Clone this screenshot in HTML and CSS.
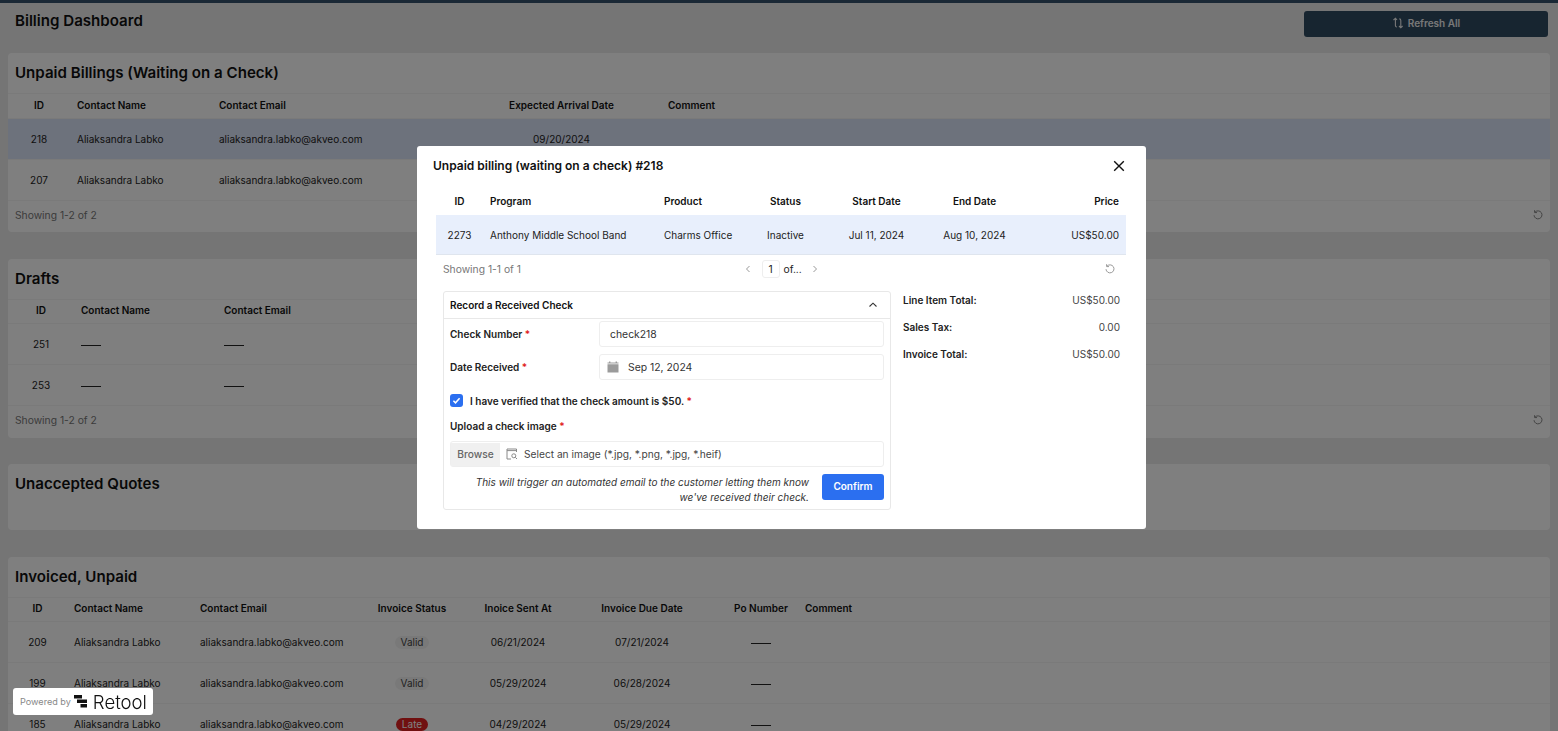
FILE: index.html
```html
<!DOCTYPE html>
<html lang="en">
<head>
  <meta charset="UTF-8">
  <title>Billing Dashboard</title>
  <link rel="stylesheet" href="styles.css">
</head>
<body>

  <div class="top-line"></div>

  <header class="page-header">
    <h1>Billing Dashboard</h1>
    <button class="refresh-all">
      <svg width="12" height="12" viewBox="0 0 12 12" fill="none" stroke="currentColor" stroke-width="1.1"><path d="M1.5 3 3.5 1.2 5 3M3.4 1.4V8.5c0 1 .6 1.5 1.5 1.5M7 9l1.8 1.8L10.6 9M8.8 10.6V3.4c0-1-.6-1.5-1.5-1.5"/></svg>
      Refresh All
    </button>
  </header>

  <!-- Unpaid billings -->
  <section class="card card-unpaid">
    <h2>Unpaid Billings (Waiting on a Check)</h2>
    <div class="row head cols-unpaid">
      <span class="center">ID</span><span>Contact Name</span><span>Contact Email</span><span class="center">Expected Arrival Date</span><span>Comment</span>
    </div>
    <div class="row selected cols-unpaid">
      <span class="center">218</span><span>Aliaksandra Labko</span><span>aliaksandra.labko@akveo.com</span><span class="center">09/20/2024</span><span></span>
    </div>
    <div class="row cols-unpaid">
      <span class="center">207</span><span>Aliaksandra Labko</span><span>aliaksandra.labko@akveo.com</span><span class="center">09/20/2024</span><span></span>
    </div>
    <div class="card-foot">
      <span>Showing 1-2 of 2</span>
      <svg class="reload" width="12" height="12" viewBox="0 0 12 12" fill="none" stroke="currentColor"><path d="M3 3.2A4 4 0 1 1 2 6.2M2.6 1.2V3.6H5"/></svg>
    </div>
  </section>

  <!-- Drafts -->
  <section class="card card-drafts">
    <h2>Drafts</h2>
    <div class="row head short cols-drafts">
      <span class="center">ID</span><span>Contact Name</span><span>Contact Email</span>
    </div>
    <div class="row cols-drafts">
      <span class="center">251</span><span><i class="dash"></i></span><span><i class="dash"></i></span>
    </div>
    <div class="row cols-drafts">
      <span class="center">253</span><span><i class="dash"></i></span><span><i class="dash"></i></span>
    </div>
    <div class="card-foot tall">
      <span>Showing 1-2 of 2</span>
      <svg class="reload" width="12" height="12" viewBox="0 0 12 12" fill="none" stroke="currentColor"><path d="M3 3.2A4 4 0 1 1 2 6.2M2.6 1.2V3.6H5"/></svg>
    </div>
  </section>

  <!-- Quotes -->
  <section class="card card-quotes">
    <h2>Unaccepted Quotes</h2>
  </section>

  <!-- Invoiced -->
  <section class="card card-invoiced">
    <h2>Invoiced, Unpaid</h2>
    <div class="row head short cols-invoiced">
      <span class="center">ID</span><span>Contact Name</span><span>Contact Email</span><span class="center">Invoice Status</span><span class="center">Inoice Sent At</span><span class="center">Invoice Due Date</span><span class="center po">Po Number</span><span>Comment</span>
    </div>
    <div class="row cols-invoiced">
      <span class="center">209</span><span>Aliaksandra Labko</span><span>aliaksandra.labko@akveo.com</span><span class="center"><b class="tag">Valid</b></span><span class="center">06/21/2024</span><span class="center">07/21/2024</span><span class="center po"><i class="dash"></i></span><span></span>
    </div>
    <div class="row cols-invoiced">
      <span class="center">199</span><span>Aliaksandra Labko</span><span>aliaksandra.labko@akveo.com</span><span class="center"><b class="tag">Valid</b></span><span class="center">05/29/2024</span><span class="center">06/28/2024</span><span class="center po"><i class="dash"></i></span><span></span>
    </div>
    <div class="row cols-invoiced">
      <span class="center">185</span><span>Aliaksandra Labko</span><span>aliaksandra.labko@akveo.com</span><span class="center"><b class="tag late">Late</b></span><span class="center">04/29/2024</span><span class="center">05/29/2024</span><span class="center po"><i class="dash"></i></span><span></span>
    </div>
  </section>

  <div class="overlay"></div>

  <!-- Modal -->
  <div class="modal">
    <div class="modal-title">
      <span>Unpaid billing (waiting on a check) #218</span>
      <svg width="12" height="12" viewBox="0 0 12 12" fill="none" stroke="#111" stroke-width="1.4"><path d="M1.2 1.2 10.8 10.8M10.8 1.2 1.2 10.8"/></svg>
    </div>

    <div class="line-table">
      <div class="row head cols-line">
        <span class="center">ID</span><span>Program</span><span>Product</span><span class="center">Status</span><span class="center">Start Date</span><span class="center">End Date</span><span class="right">Price</span>
      </div>
      <div class="row selected-light cols-line">
        <span class="center">2273</span><span>Anthony Middle School Band</span><span>Charms Office</span><span class="center">Inactive</span><span class="center">Jul 11, 2024</span><span class="center">Aug 10, 2024</span><span class="right">US$50.00</span>
      </div>
    </div>

    <div class="line-foot">
      <span class="muted">Showing 1-1 of 1</span>
      <div class="pager">
        <svg width="8" height="8" viewBox="0 0 8 8" fill="none" stroke="#999"><path d="M5.5 1 2.5 4l3 3"/></svg>
        <span class="page-box">1</span>
        <span class="page-of">of...</span>
        <svg width="8" height="8" viewBox="0 0 8 8" fill="none" stroke="#999"><path d="M2.5 1l3 3-3 3"/></svg>
      </div>
      <svg class="reload" width="12" height="12" viewBox="0 0 12 12" fill="none" stroke="#999"><path d="M3 3.2A4 4 0 1 1 2 6.2M2.6 1.2V3.6H5"/></svg>
    </div>

    <div class="modal-body">
      <div class="check-panel">
        <div class="panel-head">
          <span>Record a Received Check</span>
          <svg width="10" height="10" viewBox="0 0 10 10" fill="none" stroke="#333" stroke-width="1.1"><path d="M1.5 6.5 5 3.2l3.5 3.3"/></svg>
        </div>
        <div class="panel-body">
          <div class="field">
            <label>Check Number <em>*</em></label>
            <div class="input">check218</div>
          </div>
          <div class="field">
            <label>Date Received <em>*</em></label>
            <div class="input date">
              <svg width="12" height="12" viewBox="0 0 12 12" fill="#9b9b9b"><path d="M0.5 3.2h11V11.5H.5zM2 .6h1.4v2H2zM8.6.6H10v2H8.6zM.5 1.6h11v1H.5z"/></svg>
              Sep 12, 2024
            </div>
          </div>
          <div class="verify">
            <span class="checkbox"><svg width="9" height="9" viewBox="0 0 9 9" fill="none" stroke="#fff" stroke-width="1.5"><path d="M1.4 4.7 3.5 6.8 7.6 2.2"/></svg></span>
            <span>I have verified that the check amount is $50. <em>*</em></span>
          </div>
          <div class="upload-label">Upload a check image <em>*</em></div>
          <div class="upload">
            <span class="browse">Browse</span>
            <svg width="12" height="12" viewBox="0 0 12 12" fill="none" stroke="#8a8a8a"><path d="M10.5 4V1H1v10h4M1 2.6h9.5"/><circle cx="7.8" cy="7.8" r="2"/><path d="M9.3 9.3 11 11"/></svg>
            <span>Select an image (*.jpg, *.png, *.jpg, *.heif)</span>
          </div>
          <div class="confirm-row">
            <p>This will trigger an automated email to the customer letting them know we've received their check.</p>
            <button class="confirm">Confirm</button>
          </div>
        </div>
      </div>

      <div class="totals">
        <div class="total-row"><b>Line Item Total:</b><span>US$50.00</span></div>
        <div class="total-row"><b>Sales Tax:</b><span>0.00</span></div>
        <div class="total-row"><b>Invoice Total:</b><span>US$50.00</span></div>
      </div>
    </div>
  </div>

  <div class="powered">
    <span class="powered-by">Powered by</span>
    <svg width="14" height="13" viewBox="0 0 14 13" fill="#111"><path d="M0 0h8v3.5H0zM3 4.6h10v3.5H3zM6.5 9H13v3.5H6.5z"/></svg>
    <span class="retool">Retool</span>
  </div>

</body>
</html>
```

FILE: styles.css
```css
* {
  box-sizing: border-box;
}
html, body {
  height: 100%;
  overflow: hidden;
}
body {
  margin: 0;
  font-family: Inter, "Noto Sans", sans-serif;
  font-size: 10px;
  color: #222;
  background-color: #ebebeb;
}
.top-line {
  height: 3px;
  background-color: #34506a;
}
.page-header {
  height: 50px;
  padding: 8px 10px 0 15px;
  display: flex;
  justify-content: space-between;
  align-items: flex-start;
}
h1 {
  margin: 0;
  font-size: 15.1px;
  font-weight: 600;
  line-height: 19px;
  color: #111;
}
h2 {
  margin: 0;
  height: 40px;
  padding-left: 7px;
  font-size: 15.1px;
  font-weight: 600;
  line-height: 40px;
  color: #111;
}
.refresh-all {
  width: 244px;
  height: 26px;
  padding: 0 0 2px;
  border: none;
  border-radius: 3px;
  background-color: #2f4a60;
  color: #f0f0f0;
  font-family: inherit;
  font-size: 10px;
  font-weight: 600;
  display: flex;
  align-items: center;
  justify-content: center;
  gap: 4px;
}
.card {
  margin: 0 8px;
  background-color: #fff;
  border-radius: 4px;
}
.card-unpaid {
  height: 179px;
  margin-bottom: 27px;
}
.card-drafts {
  height: 179px;
  margin-bottom: 26px;
}
.card-quotes {
  height: 66px;
  margin-bottom: 27px;
}
.row {
  display: grid;
  height: 41px;
  align-items: center;
  border-bottom: 1px solid #f4f4f4;
}
.row > span {
  padding: 0 7px;
  white-space: nowrap;
}
.row.head {
  height: 26px;
  padding-bottom: 2px;
  font-weight: 600;
  color: #111;
  border-top: 1px solid #f4f4f4;
}
.row.head.short {
  height: 25px;
  padding-bottom: 3px;
}
.selected {
  background-color: #dbe4f8;
}
.selected-light {
  background-color: #e8effc;
  height: 40px;
  padding-top: 1px;
  border-bottom: 1px solid #dfe5ee;
}
.center {
  text-align: center;
}
.right {
  text-align: right;
}
.cols-unpaid {
  grid-template-columns: 62px 142px 250px 199px 1fr;
}
.cols-drafts {
  grid-template-columns: 66px 143px 1fr;
}
.cols-invoiced {
  grid-template-columns: 59px 126px 167px 104px 108px 140px 86px 1fr;
}
.cols-invoiced .po {
  padding: 0 0 0 12px;
}
.cols-line {
  grid-template-columns: 47px 174px 83px 91px 91px 105px 1fr;
}
.card-foot {
  height: 31px;
  padding: 0 6px 4px 7px;
  display: flex;
  align-items: center;
  justify-content: space-between;
  font-size: 10.3px;
  color: #777;
}
.card-foot.tall {
  height: 32px;
}
.reload {
  color: #888;
}
.dash {
  display: inline-block;
  width: 20px;
  height: 1px;
  vertical-align: middle;
  background-color: #222;
}
.tag {
  display: inline-block;
  padding: 0 6px;
  border-radius: 7px;
  font-weight: 400;
  line-height: 13px;
  color: #444;
  background-color: #f3f3f3;
}
.tag.late {
  color: #fff;
  background-color: #e02020;
}
.overlay {
  position: fixed;
  inset: 0;
  background-color: rgba(0, 0, 0, 0.5);
}

/* modal */
.modal {
  position: fixed;
  left: 417px;
  top: 146px;
  width: 729px;
  height: 383px;
  padding: 0 20px 0 19px;
  background-color: #fff;
  border-radius: 3px;
}
.modal-title {
  height: 39px;
  margin-left: -3px;
  padding-right: 1px;
  display: flex;
  align-items: center;
  justify-content: space-between;
  font-size: 12px;
  font-weight: 600;
  color: #111;
}
.line-table .row.head {
  height: 30px;
  padding: 1px 0 0;
  border: none;
}
.line-foot {
  height: 27px;
  padding: 0 10px 0 7px;
  display: grid;
  grid-template-columns: 1fr 100px 1fr;
  align-items: center;
  font-size: 10.3px;
}
.line-foot .reload {
  justify-self: end;
}
.muted {
  color: #777;
}
.pager {
  display: flex;
  align-items: center;
  margin-left: 14px;
}
.page-box {
  width: 18px;
  height: 18px;
  margin-left: 10px;
  border: 1px solid #eee;
  border-radius: 3px;
  text-align: center;
  line-height: 16px;
}
.page-of {
  margin: 0 9px 0 4px;
}
.modal-body {
  margin-top: 9px;
  padding-left: 7px;
  display: flex;
}
.check-panel {
  width: 448px;
  height: 219px;
  border: 1px solid #e8e8e8;
  border-radius: 3px;
}
.panel-head {
  height: 27px;
  padding: 0 12px 1px 6px;
  display: flex;
  align-items: center;
  justify-content: space-between;
  font-weight: 600;
  color: #111;
  border-bottom: 1px solid #e8e8e8;
}
.panel-body {
  padding: 2px 6px 0;
}
.field {
  height: 26px;
  margin-bottom: 7px;
  display: flex;
  align-items: center;
}
label {
  width: 149px;
  margin-top: -1px;
  font-weight: 600;
  color: #222;
}
em {
  font-style: normal;
  color: #e02020;
}
.input {
  flex: 1;
  height: 26px;
  padding-left: 10px;
  display: flex;
  align-items: center;
  gap: 9px;
  font-size: 10.4px;
  color: #333;
  border: 1px solid #eee;
  border-radius: 3px;
}
.input.date {
  padding-left: 7px;
}
.verify {
  height: 13px;
  margin-top: 14px;
  display: flex;
  align-items: center;
  gap: 7px;
  font-weight: 600;
  color: #222;
}
.checkbox {
  width: 13px;
  height: 13px;
  display: flex;
  align-items: center;
  justify-content: center;
  border-radius: 3px;
  background-color: #2b6ff0;
}
.upload-label {
  margin-top: 13px;
  height: 13px;
  line-height: 13px;
  font-weight: 600;
  color: #222;
}
.upload {
  height: 26px;
  margin-top: 8px;
  padding-bottom: 1px;
  display: flex;
  align-items: center;
  gap: 6px;
  font-size: 10.2px;
  color: #444;
  border: 1px solid #eee;
  border-radius: 3px;
}
.browse {
  width: 49px;
  height: 100%;
  margin-bottom: -1px;
  padding-bottom: 1px;
  display: flex;
  align-items: center;
  justify-content: center;
  font-weight: 500;
  color: #666;
  background-color: #f0f0f0;
}
.confirm-row {
  margin-top: 7px;
  display: flex;
  justify-content: flex-end;
  align-items: flex-start;
  gap: 13px;
}
.confirm-row p {
  width: 345px;
  margin: 1px 0 0;
  font-style: italic;
  line-height: 15px;
  text-align: right;
  color: #333;
}
.confirm {
  width: 62px;
  height: 26px;
  padding: 0 0 2px;
  border: none;
  border-radius: 3px;
  background-color: #2b6ff0;
  color: #fff;
  font-family: inherit;
  font-size: 10px;
  font-weight: 600;
}
.totals {
  flex: 1;
  margin-top: -5px;
  padding: 0 6px 0 12px;
}
.total-row {
  height: 27px;
  display: flex;
  align-items: center;
  justify-content: space-between;
  color: #444;
}
.total-row b {
  font-weight: 600;
  color: #222;
}

/* retool badge */
.powered {
  position: fixed;
  left: 13px;
  top: 688px;
  width: 140px;
  height: 27px;
  padding-left: 7px;
  display: flex;
  align-items: center;
  background-color: #fff;
  border-radius: 3px;
}
.powered-by {
  margin-right: 3px;
  font-size: 9.1px;
  color: #888;
}
.retool {
  margin-left: 5px;
  font-size: 18.6px;
  font-weight: 300;
  color: #111;
}
```
